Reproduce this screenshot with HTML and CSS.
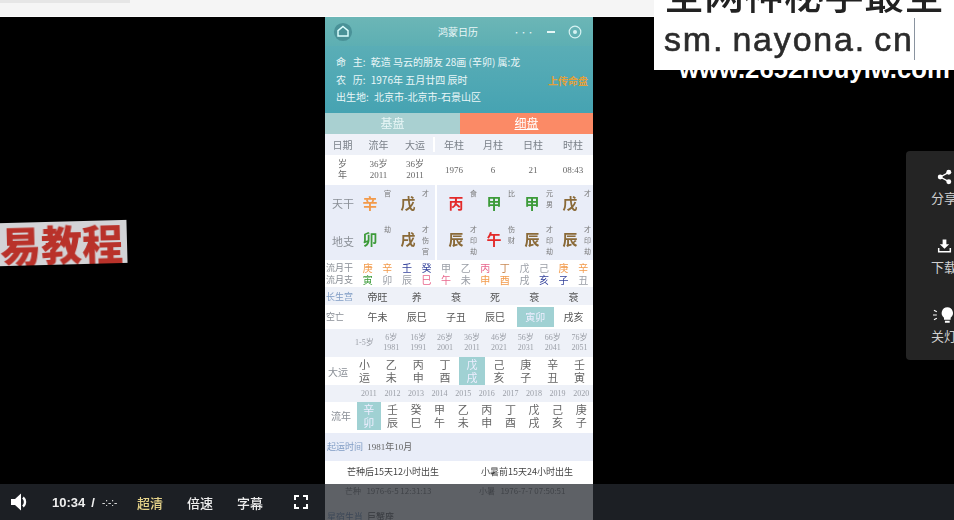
FILE: index.html
```html
<!DOCTYPE html>
<html lang="en">
<head>
<meta charset="UTF-8">
<title>视频播放</title>
<link rel="stylesheet" href="styles.css">
</head>
<body>
<div class="topbar"><div class="top-hint"></div></div>

<div class="stage">
  <div class="phone">
    <div class="app-head">
      <div class="title-bar">
        <svg class="ico-home" viewBox="0 0 22 22"><circle cx="11" cy="11" r="10" fill="#4a9298"/><path d="M11 5l5.500 4.500v6h-11v-6z" fill="none" stroke="#dff" stroke-width="1.600"/></svg>
        <span class="app-title">鸿蒙日历</span>
        <div class="title-tools">
          <span class="dots">•••</span>
          <span class="minus"></span>
          <svg class="ico-target" viewBox="0 0 14 14"><circle cx="7" cy="7" r="5.800" fill="none" stroke="#d6f2f2" stroke-width="1.200"/><circle cx="7" cy="7" r="2" fill="#d6f2f2"/></svg>
        </div>
      </div>
      <div class="info">
        <p><b>命&nbsp;&nbsp;&nbsp;主:</b> 乾造 马云的朋友 28画 (辛卯) 属:龙</p>
        <p><b>农&nbsp;&nbsp;&nbsp;历:</b> 1976年 五月廿四 辰时</p>
        <p><b>出生地:</b> 北京市-北京市-石景山区</p>
        <span class="badge">上传命盘</span>
      </div>
    </div>

    <div class="tabs">
      <div class="tab">基盘</div>
      <div class="tab tab-on">细盘</div>
    </div>

    <div class="pillars head-row">
      <div>日期</div><div>流年</div><div>大运</div><div class="gap">年柱</div><div>月柱</div><div>日柱</div><div>时柱</div>
    </div>
    <div class="pillars date-row">
      <div class="two">岁<br>年</div><div class="two">36岁<br>2011</div><div class="two">36岁<br>2011</div>
      <div class="gap">1976</div><div>6</div><div>21</div><div>08:43</div>
    </div>

    <div class="big-row gan-row">
      <div class="side-label">天干</div>
      <div class="cell"><b class="metal">辛</b><small>官</small></div>
      <div class="cell before-gap"><b class="earth">戊</b><small>才</small></div>
      <div class="cell gap"><b class="fire">丙</b><small>食</small></div>
      <div class="cell"><b class="wood">甲</b><small>比</small></div>
      <div class="cell"><b class="wood">甲</b><small>元<br>男</small></div>
      <div class="cell"><b class="earth">戊</b><small>才</small></div>
    </div>
    <div class="big-row zhi-row">
      <div class="side-label">地支</div>
      <div class="cell"><b class="wood">卯</b><small>劫</small></div>
      <div class="cell before-gap"><b class="earth">戌</b><small>才<br>伤<br>官</small></div>
      <div class="cell gap"><b class="earth">辰</b><small>才<br>印<br>劫</small></div>
      <div class="cell"><b class="fire">午</b><small>伤<br>财</small></div>
      <div class="cell"><b class="earth">辰</b><small>才<br>印<br>劫</small></div>
      <div class="cell"><b class="earth">辰</b><small>才<br>印<br>劫</small></div>
    </div>

    <div class="months">
      <div class="row12">
        <span class="lbl">流月干</span>
        <span class="metal">庚</span><span class="metal">辛</span><span class="water">壬</span><span class="water">癸</span><span class="grey">甲</span><span class="grey">乙</span><span class="pink">丙</span><span class="brown">丁</span><span class="grey">戊</span><span class="grey">己</span><span class="metal">庚</span><span class="metal">辛</span>
      </div>
      <div class="row12">
        <span class="lbl">流月支</span>
        <span class="wood">寅</span><span class="grey">卯</span><span class="grey">辰</span><span class="pink">巳</span><span class="pink">午</span><span class="grey">未</span><span class="metal">申</span><span class="metal">酉</span><span class="grey">戌</span><span class="water">亥</span><span class="water">子</span><span class="grey">丑</span>
      </div>
    </div>

    <div class="row6 life-row">
      <span class="lbl lbl-blue">长生宫</span><span>帝旺</span><span>养</span><span>衰</span><span>死</span><span>衰</span><span>衰</span>
    </div>
    <div class="row6 void-row">
      <span class="lbl">空亡</span><span>午未</span><span>辰巳</span><span>子丑</span><span>辰巳</span><span class="on">寅卯</span><span>戌亥</span>
    </div>

    <div class="luck luck-years">
      <span></span><span>1-5岁</span><span>6岁<br>1981</span><span>16岁<br>1991</span><span>26岁<br>2001</span><span>36岁<br>2011</span><span>46岁<br>2021</span><span>56岁<br>2031</span><span>66岁<br>2041</span><span>76岁<br>2051</span>
    </div>
    <div class="luck luck-row">
      <span class="lbl">大运</span><span>小<br>运</span><span>乙<br>未</span><span>丙<br>申</span><span>丁<br>酉</span><span class="on">戊<br>戌</span><span>己<br>亥</span><span>庚<br>子</span><span>辛<br>丑</span><span>壬<br>寅</span>
    </div>
    <div class="flow flow-years">
      <span></span><span>2011</span><span>2012</span><span>2013</span><span>2014</span><span>2015</span><span>2016</span><span>2017</span><span>2018</span><span>2019</span><span>2020</span>
    </div>
    <div class="flow flow-row">
      <span class="lbl">流年</span><span class="on">辛<br>卯</span><span>壬<br>辰</span><span>癸<br>巳</span><span>甲<br>午</span><span>乙<br>未</span><span>丙<br>申</span><span>丁<br>酉</span><span>戊<br>戌</span><span>己<br>亥</span><span>庚<br>子</span>
    </div>

    <div class="start-row"><span class="lbl-blue">起运时间</span> 1981年10月</div>
    <div class="terms terms-a"><span>芒种后15天12小时出生</span><span>小暑前15天24小时出生</span></div>
    <div class="terms terms-b"><span>芒种&nbsp;&nbsp;&nbsp;1976-6-5 12:31:13</span><span>小暑&nbsp;&nbsp;&nbsp;1976-7-7 07:50:51</span></div>
    <div class="star-row"><span class="lbl-blue">星宿生肖</span> 巨蟹座</div>
  </div>

  <div class="banner">易教程</div>

  <div class="side-panel">
    <div class="side-item">
      <svg viewBox="0 0 14 14"><circle cx="3" cy="7" r="2.300"/><circle cx="11" cy="2.600" r="2.300"/><circle cx="11" cy="11.400" r="2.300"/><path d="M3 7l8-4.400M3 7l8 4.400" stroke="#fff" stroke-width="1.300"/></svg>
      <span>分享</span>
    </div>
    <div class="side-item">
      <svg viewBox="0 0 16 16"><path d="M6 1h4v5h3l-5 5-5-5h3z"/><path d="M1 10v5h14v-5h-1.600v3.400H2.600V10z"/></svg>
      <span>下载</span>
    </div>
    <div class="side-item">
      <svg class="bulb" viewBox="0 0 22 16"><path d="M15 0a6 6 0 0 1 3.500 10.800V13h-7v-2.200A6 6 0 0 1 15 0zM12.500 14h5v2h-5z"/><path d="M1 3l3 1.500M0 8h4M1 13l3-1.500" stroke="#fff" stroke-width="1.200"/></svg>
      <span>关灯</span>
    </div>
  </div>
</div>

<div class="site-mark">www.2652houyiw.com</div>
<div class="stamp">
  <div class="stamp-top">全网神秘学最全</div>
  <div class="stamp-url">sm. nayona. cn<i></i></div>
</div>

<div class="controls">
  <svg class="ico-sound" viewBox="0 0 20 20"><path d="M1 7h4l6-5.500v17L5 13H1z" fill="#fff"/><path d="M13 5.500a6 6 0 0 1 0 9" fill="none" stroke="#fff" stroke-width="2.400"/></svg>
  <span class="time">10:34</span>
  <span class="slash">/</span>
  <span class="total">-:-:-</span>
  <span class="ctl ctl-gold">超清</span>
  <span class="ctl">倍速</span>
  <span class="ctl">字幕</span>
  <svg class="ico-full" viewBox="0 0 14 14"><path d="M1 5V1h4M9 1h4v4M13 9v4H9M5 13H1V9" fill="none" stroke="#fff" stroke-width="2"/></svg>
</div>
</body>
</html>
```

FILE: styles.css
```css
html, body {
  margin: 0;
  height: 100%;
  overflow: hidden;
}

body {
  width: 954px;
  height: 520px;
  display: flex;
  flex-direction: column;
  position: relative;
  background: #000;
  font-family: "Noto Sans CJK SC", "Liberation Sans", sans-serif;
}

.topbar {
  height: 16px;
  flex: none;
  background: #f5f5f5;
  border-bottom: 1px solid #fbfbfb;
}

.top-hint {
  width: 130px;
  height: 3px;
  background: #e6e6e6;
}

.stage {
  flex: 1;
  position: relative;
  display: flex;
  overflow: hidden;
}

/* phone capture in the middle of the video */
.phone {
  width: 268px;
  margin-left: 325px;
  background: #fff;
  color: #444;
  font-size: 10px;
  filter: blur(0.5px);
  flex: none;
}

.app-head {
  height: 96px;
  background: linear-gradient(#63b2b8, #46a3b2);
  color: #eaf7f8;
  position: relative;
}

.title-bar {
  height: 29px;
  display: flex;
  align-items: center;
  justify-content: center;
  position: relative;
  background: linear-gradient(#6cb6b6, #5dafb3);
}

.ico-home {
  position: absolute;
  left: 8px;
  top: 5px;
  width: 20px;
  height: 20px;
}

.app-title {
  font-size: 10px;
  margin-left: -2px;
}

.title-tools {
  position: absolute;
  right: 11px;
  top: 0;
  height: 29px;
  display: flex;
  align-items: center;
  gap: 13px;
}

.dots {
  font-size: 7px;
}

.minus {
  width: 8px;
  height: 2px;
  background: #e6f6f6;
}

.ico-target {
  width: 14px;
  height: 14px;
}

.info {
  padding: 7px 11px 0;
}

.info p {
  margin: 0;
  font-size: 10px;
  line-height: 17.500px;
}

.info b {
  font-weight: 400;
  margin-right: 3px;
}

.badge {
  position: absolute;
  right: 5px;
  top: 56px;
  color: #e2a13c;
  font-size: 10px;
  font-weight: 700;
}

.tabs {
  display: flex;
  height: 21px;
  font-size: 12px;
  line-height: 20px;
  text-align: center;
}

.tab {
  width: 135px;
  background: #a9d0d1;
  color: #e8f6f6;
}

.tab-on {
  flex: 1;
  background: #fb8a66;
  color: #fff;
  text-decoration: underline;
}

/* pillars table */
.pillars {
  display: grid;
  grid-template-columns: 35px 37px 36px 40px 40px 40px 40px;
  align-items: center;
  text-align: center;
}

.head-row {
  height: 21px;
  background: #eef1f8;
  color: #7a8088;
}

.date-row {
  height: 30px;
  color: #666;
  font-family: "Liberation Serif", "Noto Sans CJK SC", serif;
  font-size: 9px;
}

.two {
  line-height: 11px;
}

.big-row {
  display: grid;
  grid-template-columns: 26px 38px 46px 40px 38px 38px 38px;
  background: #e9edf8;
}

.gan-row {
  height: 36px;
}

.zhi-row {
  height: 39px;
}

.gap {
  border-left: 2px solid #fff;
}

.side-label {
  color: #8a8f96;
  font-size: 11px;
  align-self: center;
  padding-left: 7px;
  white-space: nowrap;
}

.cell {
  display: flex;
  justify-content: center;
  gap: 6px;
  padding-top: 3px;
}

.before-gap {
  padding-right: 8px;
}

.cell b {
  font-size: 15px;
  line-height: 22px;
  margin-top: 4px;
}

.cell small {
  font-size: 7px;
  line-height: 11px;
  color: #777;
  width: 8px;
  margin-right: -14px;
  text-align: center;
}

.wood { color: #3d9b3a; }
.fire { color: #e32a2a; }
.earth { color: #8a6a38; }
.metal { color: #f29a4a; }
.water { color: #35439c; }
.grey { color: #9a9ea6; }
.pink { color: #e8668c; }
.brown { color: #c98a55; }

.lbl {
  color: #8a8f96;
  font-size: 10px;
  white-space: nowrap;
}

.lbl-blue {
  color: #7f9cc4;
}

.months {
  background: #fff;
  padding: 2px 0 1px;
}

.row12 {
  display: grid;
  grid-template-columns: 33px repeat(12, 1fr);
  height: 12px;
  line-height: 12px;
  font-size: 10px;
  text-align: center;
}

.row12 .lbl {
  font-size: 9px;
  text-align: left;
  margin-left: 1px;
}

.row6 {
  display: grid;
  grid-template-columns: 33px repeat(6, 1fr);
  text-align: center;
  align-items: center;
  color: #555;
}

.row6 .lbl {
  text-align: left;
  margin-left: 1px;
  font-size: 9px;
}

.life-row {
  height: 18px;
  background: #eef1f8;
}

.void-row {
  height: 24px;
  background: #fff;
}

.void-row span {
  line-height: 20px;
}

.void-row .on,
.luck .on,
.flow .on {
  background: #a0d1d3;
  color: #eef;
}

.void-row .on {
  margin: 0 0 0 2px;
}

.luck {
  display: grid;
  grid-template-columns: 26px repeat(9, 1fr);
  text-align: center;
  align-items: center;
}

.luck-years {
  height: 28px;
  background: #eef1f8;
  color: #9a9ea6;
  font-size: 8px;
  line-height: 10px;
  font-family: "Liberation Serif", "Noto Sans CJK SC", serif;
}

.luck-row,
.flow-row {
  font-size: 11px;
  line-height: 13px;
  color: #666;
  background: #fff;
}

.luck-row {
  height: 28px;
}

.luck-row span {
  padding: 1px 0;
}

.flow {
  display: grid;
  grid-template-columns: 32px repeat(10, 1fr);
  text-align: center;
  align-items: center;
}

.flow-years {
  height: 17px;
  background: #eef1f8;
  color: #9a9ea6;
  font-size: 8px;
  font-family: "Liberation Serif", serif;
}

.flow-row {
  height: 31px;
  align-items: start;
}

.flow-row span {
  padding: 1px 0;
}

.flow-row .lbl {
  margin-top: 6px;
}

.start-row {
  height: 28px;
  line-height: 28px;
  background: #e9edf8;
  color: #666;
  font-family: "Liberation Serif", "Noto Sans CJK SC", serif;
  font-size: 9px;
  padding-left: 2px;
}

.start-row .lbl-blue,
.star-row .lbl-blue {
  font-size: 9px;
  font-family: "Noto Sans CJK SC", sans-serif;
  margin-right: 2px;
}

.terms {
  display: grid;
  grid-template-columns: 134px 1fr;
  height: 22px;
  line-height: 22px;
  font-size: 9px;
  color: #444;
  padding-left: 22px;
  white-space: nowrap;
}

.terms-b {
  color: #888;
  font-size: 8px;
  line-height: 16px;
  height: 20px;
  padding-left: 20px;
}

.star-row {
  font-size: 9px;
  line-height: 28px;
  padding-left: 2px;
  color: #666;
}

/* stuff burned into the video */
.stamp {
  position: absolute;
  left: 654px;
  top: 0;
  width: 300px;
  height: 70px;
  background: #fff;
  overflow: hidden;
  filter: blur(0.6px);
}

.stamp-top {
  font-size: 40px;
  line-height: 40px;
  margin: -28px 0 0 10px;
  color: #222;
  font-weight: 500;
  white-space: nowrap;
}

.stamp-url {
  font-family: "Liberation Sans", sans-serif;
  font-size: 34px;
  line-height: 42px;
  margin: 6px 0 0 10px;
  letter-spacing: 1.800px;
  word-spacing: -3px;
  color: #2b2b2b;
  -webkit-text-stroke: 0.6px #2b2b2b;
  white-space: nowrap;
}

.stamp-url i {
  display: inline-block;
  width: 1px;
  height: 42px;
  background: #8a94a0;
  vertical-align: -9px;
}

.site-mark {
  position: absolute;
  left: 679px;
  top: 57px;
  font-family: "Liberation Sans", sans-serif;
  font-weight: 700;
  font-size: 25.700px;
  line-height: 24px;
  color: #fff;
  white-space: nowrap;
}

.banner {
  position: absolute;
  left: -36px;
  top: 205px;
  width: 163px;
  height: 43px;
  background: #d3d3d6;
  color: #b9322a;
  font-size: 41px;
  font-weight: 900;
  line-height: 43px;
  text-align: right;
  padding-right: 4px;
  box-sizing: border-box;
  transform: rotate(-1.500deg);
  filter: blur(0.4px);
  white-space: nowrap;
  overflow: hidden;
}

.side-panel {
  position: absolute;
  left: 906px;
  top: 134px;
  width: 76px;
  height: 209px;
  background: #242424;
  border-radius: 4px;
  display: flex;
  flex-direction: column;
  gap: 25px;
  padding-top: 18px;
  box-sizing: border-box;
  color: #d0d0d0;
  text-align: center;
}

.side-item {
  display: flex;
  flex-direction: column;
  align-items: center;
  height: 44px;
  font-size: 13px;
  line-height: 20px;
  gap: 3px;
}

.side-item svg {
  width: 15px;
  height: 16px;
  fill: #fff;
}

.side-item .bulb {
  width: 21px;
  height: 16px;
  margin-left: -2px;
}

.controls {
  position: absolute;
  left: 0;
  right: 0;
  bottom: 0;
  height: 36px;
  background: rgba(38, 42, 48, 0.74);
  display: flex;
  align-items: center;
  color: #eee;
  font-family: "Liberation Sans", "Noto Sans CJK SC", sans-serif;
}

.ico-sound {
  width: 20px;
  height: 20px;
  margin-left: 10px;
}

.time {
  margin-left: 22px;
  font-size: 13px;
  font-weight: 700;
}

.slash {
  margin-left: 6px;
  font-size: 13px;
  font-weight: 700;
}

.total {
  margin-left: 7px;
  width: 35px;
  font-size: 10px;
}

.ctl {
  width: 50px;
  font-size: 13px;
  font-weight: 500;
  font-family: "Noto Sans CJK SC", sans-serif;
}

.ctl-gold {
  color: #e6d38a;
}

.ico-full {
  width: 14px;
  height: 14px;
  margin-left: 7px;
}
```
